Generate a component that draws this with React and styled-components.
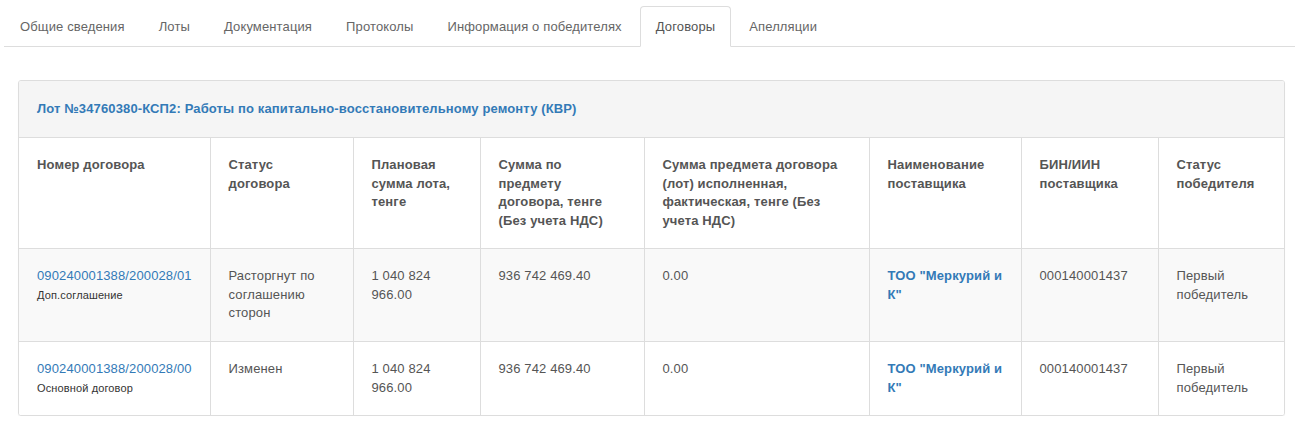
import styled, { createGlobalStyle } from "styled-components";

const GlobalStyle = createGlobalStyle`
  body {
    margin: 0;
    background: #fff;
    font-family: "Liberation Sans", Arial, sans-serif;
    font-size: 13px;
    line-height: 1.42857;
    letter-spacing: 0.13px;
    color: #555;
  }
`;

const Page = styled.div`
  padding: 6px 0 0 4px;
`;

const Tabs = styled.ul`
  display: flex;
  list-style: none;
  margin: 0;
  padding: 0;
  border-bottom: 1px solid #ddd;
`;

const Tab = styled.li`
  margin-right: 2px;
  margin-bottom: -1px;
  padding: 10px 15px 9px;
  line-height: 20px;
  border: 1px solid ${(p) => (p.$active ? "#ddd" : "transparent")};
  border-bottom-color: ${(p) => (p.$active ? "#fff" : "transparent")};
  border-radius: 4px 4px 0 0;
  background: ${(p) => (p.$active ? "#fff" : "transparent")};
  color: ${(p) => (p.$active ? "#555" : "#666")};
  cursor: pointer;
`;

const Panel = styled.div`
  margin: 33px 10px 0 14px;
  border: 1px solid #ddd;
  border-radius: 3px;
  box-shadow: 0 1px 1px rgba(0, 0, 0, 0.05);
  overflow: hidden;
`;

const PanelHeading = styled.div`
  padding: 18px 18px;
  line-height: 20px;
  background: #f5f5f5;
  border-bottom: 1px solid #ddd;
  font-weight: bold;
  color: #337ab7;
`;

const Table = styled.table`
  width: 100%;
  border-collapse: collapse;
  table-layout: fixed;
`;

const Th = styled.th`
  text-align: left;
  vertical-align: top;
  padding: 18px 18px;
  font-weight: bold;
  color: #555;
  border-left: 1px solid #ddd;
  border-bottom: 1px solid #ddd;
  &:first-child {
    border-left: none;
  }
`;

const Row = styled.tr`
  background: ${(p) => (p.$striped ? "#f9f9f9" : "#fff")};
  &:not(:last-child) td {
    border-bottom: 1px solid #ddd;
  }
`;

const Td = styled.td`
  vertical-align: top;
  padding: 18px 18px;
  border-left: 1px solid #ddd;
  &:first-child {
    border-left: none;
  }
`;

const Link = styled.a`
  color: #337ab7;
  text-decoration: none;
  font-weight: ${(p) => (p.$bold ? "bold" : "normal")};
`;

const Note = styled.div`
  font-size: 11px;
  line-height: 18px;
  color: #333;
`;

const tabs = [
  "Общие сведения",
  "Лоты",
  "Документация",
  "Протоколы",
  "Информация о победителях",
  "Договоры",
  "Апелляции",
];

const columns = [
  { title: "Номер договора", width: 191 },
  { title: "Статус договора", width: 143 },
  { title: "Плановая сумма лота, тенге", width: 127 },
  { title: "Сумма по предмету договора, тенге (Без учета НДС)", width: 164 },
  { title: "Сумма предмета договора (лот) исполненная, фактическая, тенге (Без учета НДС)", width: 225 },
  { title: "Наименование поставщика", width: 152 },
  { title: "БИН/ИИН поставщика", width: 137 },
  { title: "Статус победителя" },
];

const contracts = [
  {
    number: "090240001388/200028/01",
    kind: "Доп.соглашение",
    status: "Расторгнут по соглашению сторон",
  },
  {
    number: "090240001388/200028/00",
    kind: "Основной договор",
    status: "Изменен",
  },
];

export default function App() {
  return (
    <Page>
      <GlobalStyle />
      <Tabs>
        {tabs.map((t) => (
          <Tab key={t} $active={t === "Договоры"}>
            {t}
          </Tab>
        ))}
      </Tabs>
      <Panel>
        <PanelHeading>
          Лот №34760380-КСП2: Работы по капитально-восстановительному ремонту (КВР)
        </PanelHeading>
        <Table>
          <colgroup>
            {columns.map((c) => (
              <col key={c.title} style={c.width ? { width: c.width } : undefined} />
            ))}
          </colgroup>
          <thead>
            <tr>
              {columns.map((c) => (
                <Th key={c.title}>{c.title}</Th>
              ))}
            </tr>
          </thead>
          <tbody>
            {contracts.map((c, i) => (
              <Row key={c.number} $striped={i % 2 === 0}>
                <Td>
                  <Link href="#">{c.number}</Link>
                  <Note>{c.kind}</Note>
                </Td>
                <Td>{c.status}</Td>
                <Td>1 040 824 966.00</Td>
                <Td>936 742 469.40</Td>
                <Td>0.00</Td>
                <Td>
                  <Link href="#" $bold>
                    ТОО "Меркурий и К"
                  </Link>
                </Td>
                <Td>000140001437</Td>
                <Td>Первый победитель</Td>
              </Row>
            ))}
          </tbody>
        </Table>
      </Panel>
    </Page>
  );
}
